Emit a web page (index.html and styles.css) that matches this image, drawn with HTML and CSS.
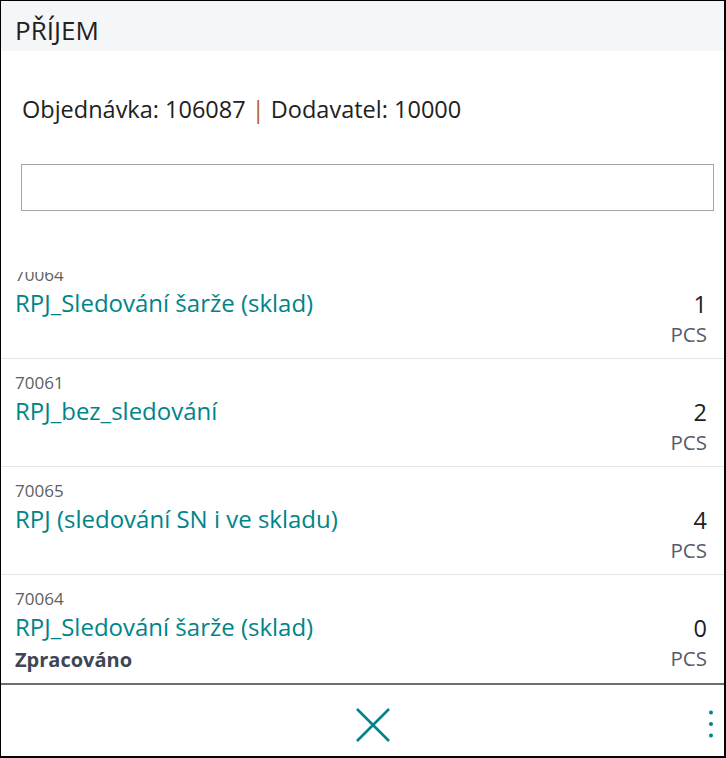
FILE: index.html
```html
<!DOCTYPE html>
<html lang="cs">
<head>
<meta charset="utf-8">
<title>Příjem</title>
<link rel="stylesheet" href="styles.css">
</head>
<body>
<div class="app">
  <header class="title">PŘÍJEM</header>
  <div class="info">Objednávka: 106087 <span class="pipe">|</span> Dodavatel: 10000</div>
  <div class="search"><input class="search-input" type="text" aria-label="Hledat"></div>
  <div class="list">
    <div class="rows">
      <div class="row">
        <div class="main">
          <div class="code">70064</div>
          <div class="name">RPJ_Sledování šarže (sklad)</div>
        </div>
        <div class="qty">
          <div class="num">1</div>
          <div class="unit">PCS</div>
        </div>
      </div>
      <div class="row">
        <div class="main">
          <div class="code">70061</div>
          <div class="name">RPJ_bez_sledování</div>
        </div>
        <div class="qty">
          <div class="num">2</div>
          <div class="unit">PCS</div>
        </div>
      </div>
      <div class="row">
        <div class="main">
          <div class="code">70065</div>
          <div class="name">RPJ (sledování SN i ve skladu)</div>
        </div>
        <div class="qty">
          <div class="num">4</div>
          <div class="unit">PCS</div>
        </div>
      </div>
      <div class="row last">
        <div class="main">
          <div class="code">70064</div>
          <div class="name">RPJ_Sledování šarže (sklad)</div>
          <div class="status">Zpracováno</div>
        </div>
        <div class="qty">
          <div class="num">0</div>
          <div class="unit">PCS</div>
        </div>
      </div>
    </div>
  </div>
  <footer class="bar">
    <button class="close" aria-label="Zavřít">
      <svg width="34" height="34" viewBox="0 0 34 34"><path d="M1 1 L33 33 M33 1 L1 33" stroke="#008489" stroke-width="2.6" fill="none"/></svg>
    </button>
    <button class="more" aria-label="Více">
      <svg width="6" height="28" viewBox="0 0 6 28"><circle cx="3" cy="2.5" r="2"/><circle cx="3" cy="14" r="2"/><circle cx="3" cy="25.5" r="2"/></svg>
    </button>
  </footer>
</div>
</body>
</html>
```

FILE: styles.css
```css
* { box-sizing: border-box; }
html, body { margin: 0; padding: 0; background: #fff; }
body { font-family: "Open Sans", "Noto Sans", sans-serif; color: #212121; }

.app {
  width: 726px;
  height: 758px;
  border-style: solid;
  border-color: #000;
  border-width: 1px 2px 2px 1px;
  display: flex;
  flex-direction: column;
  overflow: hidden;
}

.title {
  height: 50px;
  background: #f5f6f8;
  padding: 14px 14px 0;
  font-size: 26px;
  line-height: 30px;
  color: #212121;
}

.info {
  padding: 43px 21px 0;
  font-size: 23.5px;
  line-height: 30px;
  height: 81px;
}
.pipe { color: #b4601e; }

.search {
  padding: 32px 10px 0 20px;
}
.search-input {
  display: block;
  width: 100%;
  height: 47px;
  border: 1px solid #a6a6a6;
  margin: 0;
  padding: 0 10px;
  font: inherit;
  outline: none;
  background: #fff;
}

.list {
  flex: 1;
  margin-top: 61px;
  overflow: hidden;
}
.rows { margin-top: -21px; }

.row {
  height: 108px;
  display: flex;
  justify-content: space-between;
  padding: 14px 17px 0 14px;
  border-bottom: 1px solid #e6e6e6;
}
.row.last { border-bottom: none; }

.code {
  font-size: 17px;
  line-height: 20px;
  color: #605e5c;
}
.name {
  margin-top: 3px;
  font-size: 24px;
  line-height: 30px;
  color: #008489;
}
.status {
  margin-top: 6px;
  font-size: 20px;
  line-height: 24px;
  font-weight: 700;
  color: #3f4654;
}

.qty { text-align: right; padding-top: 24px; }
.num {
  font-size: 23.5px;
  line-height: 30px;
  color: #212121;
}
.unit {
  margin-top: 1px;
  font-size: 20.5px;
  line-height: 28px;
  color: #535d6d;
}

.bar {
  height: 73px;
  border-top: 2px solid #6e6e6e;
  display: flex;
  align-items: center;
  justify-content: center;
  position: relative;
}
.close {
  border: 0;
  background: none;
  padding: 0;
  margin: 8px 0 0 20px;
  display: flex;
  cursor: pointer;
}
.more {
  position: absolute;
  right: 10px;
  top: 25px;
  border: 0;
  background: none;
  padding: 0;
  display: flex;
  fill: #008489;
}
```
